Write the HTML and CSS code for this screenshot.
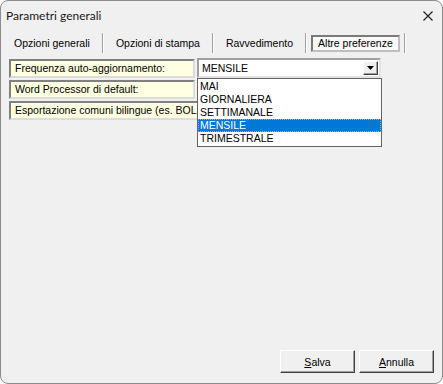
FILE: index.html
```html
<!DOCTYPE html>
<html lang="it">
<head>
<meta charset="UTF-8">
<title>Parametri generali</title>
<link rel="stylesheet" href="styles.css">
</head>
<body>
<div class="finestra">
    <div class="barra-titolo">
        <span class="titolo">Parametri generali</span>
        <svg class="chiudi" width="10" height="10" viewBox="0 0 10 10">
            <path d="M0.5 0.5 L9.5 9.5 M9.5 0.5 L0.5 9.5" stroke="#1a1a1a" stroke-width="1.1" fill="none"/>
        </svg>
    </div>

    <div class="schede">
        <span class="scheda">Opzioni generali</span>
        <span class="separatore"></span>
        <span class="scheda">Opzioni di stampa</span>
        <span class="separatore"></span>
        <span class="scheda">Ravvedimento</span>
        <span class="separatore"></span>
        <span class="scheda scheda-attiva">Altre preferenze</span>
        <span class="separatore"></span>
    </div>

    <div class="righe">
        <div class="riga">
            <div class="etichetta">Frequenza auto-aggiornamento:</div>
            <div class="combo">
                <div class="combo-campo">
                    <span class="combo-valore">MENSILE</span>
                    <span class="combo-bottone">
                        <svg width="7" height="4" viewBox="0 0 7 4"><path d="M0 0 H7 L3.5 4 Z" fill="#000"/></svg>
                    </span>
                </div>
                <ul class="lista">
                    <li>MAI</li>
                    <li>GIORNALIERA</li>
                    <li>SETTIMANALE</li>
                    <li class="selezionato">MENSILE</li>
                    <li>TRIMESTRALE</li>
                </ul>
            </div>
        </div>
        <div class="riga">
            <div class="etichetta">Word Processor di default:</div>
        </div>
        <div class="riga">
            <div class="etichetta etichetta-coperta">Esportazione comuni bilingue (es. BOLZ</div>
        </div>
    </div>

    <div class="pulsanti">
        <button type="button" class="pulsante"><u>S</u>alva</button>
        <button type="button" class="pulsante"><u>A</u>nnulla</button>
    </div>
</div>
</body>
</html>
```

FILE: styles.css
```css
html, body {
    margin: 0;
    padding: 0;
    background-color: #ffffff;
}
.finestra {
    width: 443px;
    height: 384px;
    box-sizing: border-box;
    border: 1px solid #8c8c8c;
    border-radius: 8px;
    background-color: #f0f0f0;
    display: flex;
    flex-direction: column;
    font-family: "Liberation Sans", Arial, sans-serif;
    font-size: 10.5px;
    color: #000;
    overflow: hidden;
}
.barra-titolo {
    height: 28px;
    display: flex;
    align-items: center;
    justify-content: space-between;
    padding: 0 9px 0 5px;
}
.titolo {
    font-family: Lato, sans-serif;
    font-size: 12px;
    color: #1a1a1a;
}
.chiudi {
    margin-top: 1px;
}

/* schede */
.schede {
    display: flex;
    align-items: center;
    height: 20px;
    margin-top: 4px;
    padding-left: 1px;
}
.scheda {
    padding: 0 12px;
    line-height: 17px;
    white-space: nowrap;
}
.separatore {
    width: 1px;
    height: 20px;
    background-color: #a0a0a0;
    border-right: 1px solid #fff;
}
.scheda-attiva {
    margin: 0 4px;
    padding: 0 5px;
    background-color: #f9f9f9;
    border: 2px solid #7a7a7a;
    border-right-color: #bfbfbf;
    border-bottom-color: #bfbfbf;
    line-height: 13px;
}

/* righe */
.righe {
    display: flex;
    flex-direction: column;
    gap: 2px;
    padding-left: 8px;
    margin-top: 6px;
}
.riga {
    display: flex;
    gap: 2px;
    height: 19px;
}
.etichetta {
    width: 186px;
    box-sizing: border-box;
    background-color: #ffffe1;
    border: 2px solid #808080;
    border-right-color: #dcdcdc;
    border-bottom-color: #dcdcdc;
    padding-left: 4px;
    line-height: 15px;
    white-space: nowrap;
}
.etichetta-coperta {
    width: 188px;
    border-right: none;
    overflow: hidden;
}
.combo {
    position: relative;
    width: 184px;
}
.combo-campo {
    height: 20px;
    margin-top: -1px;
    box-sizing: border-box;
    background-color: #fff;
    border: 2px solid #a0a0a0;
    border-right-color: #e3e3e3;
    border-bottom-color: #e3e3e3;
    display: flex;
    align-items: center;
    justify-content: space-between;
    padding-left: 3px;
}
.combo-bottone {
    width: 15px;
    height: 14px;
    box-sizing: border-box;
    background-color: #f0f0f0;
    border: 1px solid #fff;
    border-right-color: #404040;
    border-bottom-color: #404040;
    box-shadow: inset -1px -1px #a0a0a0;
    display: flex;
    align-items: center;
    justify-content: center;
    margin-right: 1px;
}
.lista {
    position: absolute;
    top: 19px;
    left: 0;
    width: 185px;
    box-sizing: border-box;
    margin: 0;
    padding: 1px 0;
    list-style: none;
    background-color: #fff;
    border: 1px solid #646464;
}
.lista li {
    height: 13px;
    line-height: 13px;
    padding-left: 2px;
}
.lista .selezionato {
    background-color: #0078d7;
    color: #fff;
    outline: 1px dotted #f0a030;
    outline-offset: -1px;
}

/* pulsanti */
.pulsanti {
    margin-top: auto;
    display: flex;
    justify-content: flex-end;
    gap: 4px;
    padding: 0 8px 10px 0;
}
.pulsante {
    width: 75px;
    height: 23px;
    font-family: "Liberation Sans", Arial, sans-serif;
    font-size: 10.5px;
    color: #000;
    background-color: #f0f0f0;
    border: 1px solid #fff;
    border-right-color: #404040;
    border-bottom-color: #404040;
    box-shadow: inset -1px -1px #a0a0a0;
    padding: 0;
}
```
